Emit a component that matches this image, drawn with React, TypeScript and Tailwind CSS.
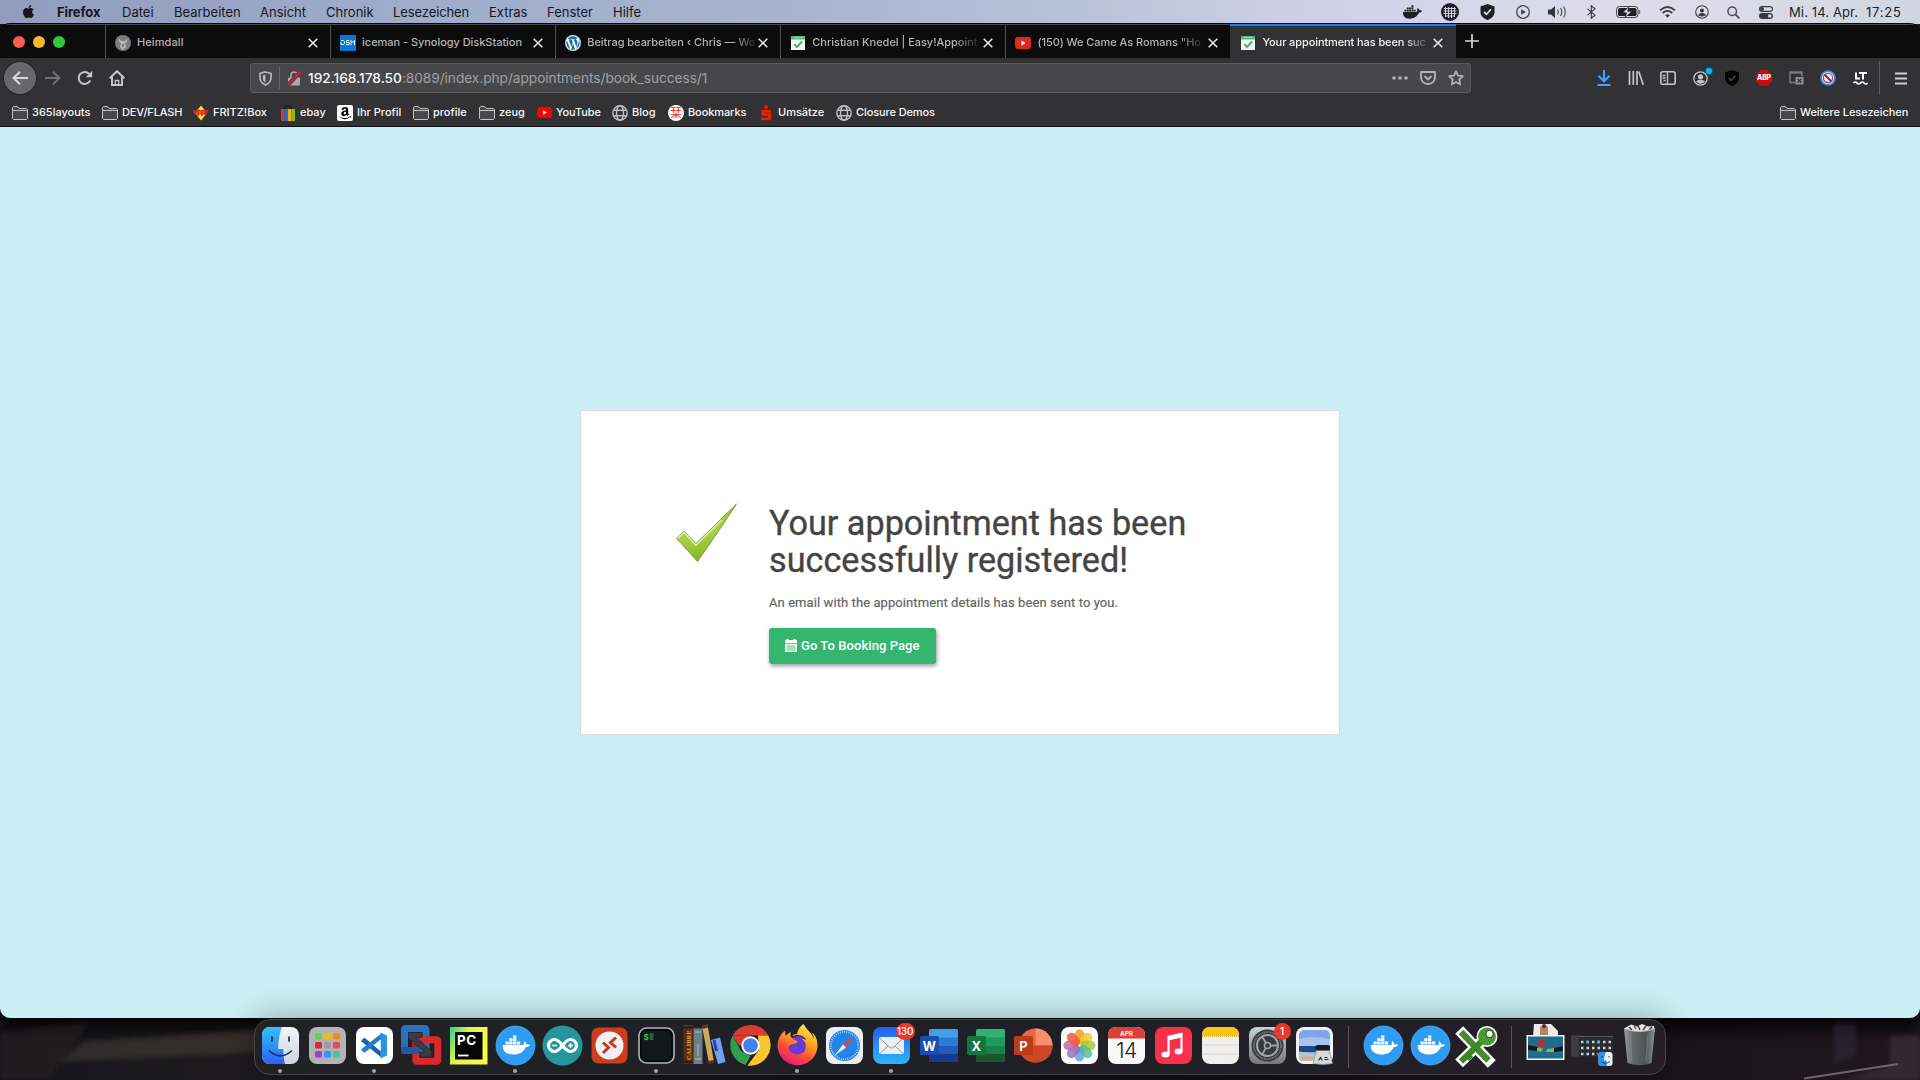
import React from "react";
import { FaApple, FaDocker, FaFirefoxBrowser, FaWordpress, FaAmazon } from "react-icons/fa";

/* ---------- small glyph helpers ---------- */

type SvgProps = { w: number; h: number; box?: string; className?: string; children: React.ReactNode };

function Glyph({ w, h, box, className = "", children }: SvgProps) {
  return (
    <svg width={w} height={h} viewBox={box ?? `0 0 ${w} ${h}`} fill="none" className={`shrink-0 ${className}`}>
      {children}
    </svg>
  );
}

function Folder() {
  return (
    <Glyph w={16} h={14}>
      <path d="M.5 12.5v-11l1-1h4l1.5 2h7.5l1 1v9l-1 1h-13z" fill="#48484b" stroke="#c4c4c5" />
      <path d="M1 4.5h14" stroke="#c4c4c5" />
    </Glyph>
  );
}

function Globe() {
  return (
    <Glyph w={16} h={16} className="text-[#bdbdbf]">
      <g stroke="currentColor" strokeWidth="1.4">
        <circle cx="8" cy="8" r="7.2" />
        <ellipse cx="8" cy="8" rx="3.5" ry="7.2" />
        <path d="M1.6 5.3h12.8M1.6 10.7h12.8" />
      </g>
    </Glyph>
  );
}

/* ---------- menu bar ---------- */

const menus = [
  { label: "Firefox", cls: "w-[65px] font-bold tracking-[-0.1px]" },
  { label: "Datei", cls: "w-[52px]" },
  { label: "Bearbeiten", cls: "w-[86px]" },
  { label: "Ansicht", cls: "w-[66px]" },
  { label: "Chronik", cls: "w-[67px]" },
  { label: "Lesezeichen", cls: "w-[96px] tracking-[-0.1px]" },
  { label: "Extras", cls: "w-[58px]" },
  { label: "Fenster", cls: "w-[66px]" },
  { label: "Hilfe", cls: "w-[40px]" },
];

function MenuBar() {
  return (
    <header className="flex h-6 items-center bg-[linear-gradient(90deg,#929dbd_0%,#9facca_22%,#a9b5d0_42%,#b7c3d8_56%,#cdcfe5_67%,#dad9e9_80%,#dfdce9_88%,#cfd6e2_100%)] pl-[21px] text-[13px] text-[#15171f]">
      <FaApple className="mr-[21px] -mt-0.5 size-[15px] shrink-0 text-[#17181d]" />
      {menus.map((m) => (
        <span key={m.label} className={`shrink-0 whitespace-nowrap pt-[2px] ${m.cls}`}>
          {m.label}
        </span>
      ))}
      <div className="ml-auto flex h-6 items-center text-[#1d1e24]">
        <div className="flex w-[37px] justify-center">
          <FaDocker className="h-[18px] w-[19px]" />
        </div>
        <div className="flex w-[38px] justify-center">
          <Glyph w={18} h={18}>
            <circle cx="9" cy="9" r="9" fill="currentColor" />
            <path d="M3 5.5h12M2.5 8h13M2.5 10.5h13M4 13h10M4.5 4v10M7.5 4v11M10.5 4v11M13.5 4v10" stroke="#dcdbe9" strokeWidth=".9" />
          </Glyph>
        </div>
        <div className="flex w-[37px] justify-center">
          <Glyph w={15} h={16}>
            <path d="M7.5 0 14.500 2.500v5.500c0 4-3 6.500-7 8-4-1.500-7-4-7-8V2.500z" fill="currentColor" />
            <path d="m4 7.800 2.500 2.500L11 5.300" stroke="#dcdbe9" strokeWidth="1.700" />
          </Glyph>
        </div>
        <div className="flex w-[34px] justify-center">
          <Glyph w={14} h={14}>
            <circle cx="7" cy="7" r="6.300" stroke="#3e3f45" strokeWidth="1.200" />
            <path d="M5.200 4.300v5.400L9.800 7z" fill="#3e3f45" />
          </Glyph>
        </div>
        <div className="flex w-[35px] justify-center">
          <Glyph w={19} h={14}>
            <path d="M0 4.500h3l4-3.500v12L3 9.500H0z" fill="#34353b" />
            <path d="M9.500 4.500q1.500 2.500 0 5M12.500 3q2.600 4 0 8M15.500 1.500q3.600 5.500 0 11" stroke="#55565e" strokeWidth="1.200" />
          </Glyph>
        </div>
        <div className="flex w-[33px] justify-center">
          <Glyph w={9} h={14}>
            <path d="m.5 3.800 7.500 6.400-3.700 3V.8l3.700 3-7.500 6.400" stroke="#34353b" strokeWidth="1.100" />
          </Glyph>
        </div>
        <div className="flex w-[40px] justify-center">
          <Glyph w={25} h={12}>
            <rect x=".5" y=".5" width="21.500" height="11" rx="3" stroke="#44454b" />
            <rect x="2" y="2" width="18.500" height="8" rx="1.600" fill="#1d1e24" />
            <path d="M23.500 4.200v3.600" stroke="#66676e" strokeWidth="1.400" />
            <path d="M12.700.8 6.500 6.700h4l-1.200 4.500L16 5.300h-4.300z" fill="#e4e2ee" stroke="#1d1e24" strokeWidth=".7" />
          </Glyph>
        </div>
        <div className="flex w-[38px] justify-center">
          <Glyph w={17} h={12}>
            <path d="M1 4.300q7.500-6.600 15 0M3.600 7q4.900-4.300 9.800 0" stroke="#3a3b42" strokeWidth="1.700" />
            <path d="m8.500 11.800-2.300-2.600q2.300-1.800 4.600 0z" fill="#3a3b42" />
          </Glyph>
        </div>
        <div className="flex w-[31px] justify-center">
          <Glyph w={14} h={14}>
            <circle cx="7" cy="7" r="6.300" stroke="#3a3b42" strokeWidth="1.100" />
            <circle cx="7" cy="5.400" r="2" fill="#3a3b42" />
            <path d="M3.300 10.500q0-2.600 3.700-2.600t3.700 2.600q-3.700 2-7.400 0" fill="#3a3b42" />
          </Glyph>
        </div>
        <div className="flex w-[33px] justify-center">
          <Glyph w={13} h={13}>
            <circle cx="5.200" cy="5.200" r="4.300" stroke="#4b4c54" strokeWidth="1.500" />
            <path d="m8.400 8.400 4 4" stroke="#4b4c54" strokeWidth="1.900" />
          </Glyph>
        </div>
        <div className="flex w-[31px] justify-center">
          <Glyph w={14} h={13}>
            <rect x=".6" y=".6" width="12.800" height="4.800" rx="2.400" stroke="#3a3b42" strokeWidth="1.100" />
            <circle cx="3" cy="3" r="2" fill="#3a3b42" />
            <rect y="7" width="14" height="6" rx="3" fill="#3a3b42" />
            <circle cx="10.800" cy="10" r="1.800" fill="#dcdbe9" />
          </Glyph>
        </div>
        <span className="ml-[8px] w-[77px] whitespace-nowrap pt-px tracking-[0.12px]">Mi. 14. Apr.</span>
        <span className="w-[54px] whitespace-nowrap pt-px tracking-[0.8px]">17:25</span>
      </div>
    </header>
  );
}

/* ---------- tabs ---------- */

function CalendarFavicon() {
  return (
    <Glyph w={14} h={14}>
      <path d="M0 0h14v14H0z" fill="#f4f6f4" />
      <path d="M0 0h14v3.500H0z" fill="#57b77a" />
      <path d="M2 1.500h10" stroke="#8fd3a6" />
      <path d="m3.300 8.300 2.700 2.700 5-5.500" stroke="#45b36e" strokeWidth="2" />
    </Glyph>
  );
}

function YoutubeIcon({ w = 16, h = 12, fill = "#f00" }: { w?: number; h?: number; fill?: string }) {
  return (
    <Glyph w={w} h={h} box="0 0 16 12">
      <rect width="16" height="12" rx="3" fill={fill} />
      <path d="M6.400 3.500v5L10.700 6z" fill="#fff" />
    </Glyph>
  );
}

const tabs = [
  {
    title: "Heimdall",
    cls: "tracking-[0.1px]",
    icon: (
      <Glyph w={16} h={16}>
        <circle cx="8" cy="8" r="8" fill="#7b7b7b" />
        <path d="M4 3q-1 4 2 5l-1 4 3 3 3-3-1-4q3-1 2-5-1 3-2.500 3h-3Q5 6 4 3z" fill="#b9b9b9" />
        <path d="M7 9h2l-.3 3H7.300z" fill="#666" />
      </Glyph>
    ),
  },
  {
    title: "iceman - Synology DiskStation",
    cls: "tracking-[-0.04px]",
    icon: (
      <Glyph w={16} h={16}>
        <rect width="16" height="16" rx="1" fill="#0a78d1" />
        <path d="M1 5.500h2.500l1 1v2l-1 1H1V7M9.300 5.500H6.500v2h2.800v2H6M11 10V5.500l1.800 2 1.700-2V10" stroke="#fff" strokeWidth=".9" />
      </Glyph>
    ),
  },
  {
    title: "Beitrag bearbeiten ‹ Chris — Wo",
    cls: "tracking-[-0.03px] [mask-image:linear-gradient(90deg,#000_86%,transparent_103%)]",
    icon: (
      <span className="flex size-4 items-center justify-center rounded-full bg-white">
        <FaWordpress className="size-4 text-[#16719a]" />
      </span>
    ),
  },
  {
    title: "Christian Knedel | Easy!Appoint",
    cls: "tracking-[-0.03px] [mask-image:linear-gradient(90deg,#000_86%,transparent_103%)]",
    icon: <CalendarFavicon />,
  },
  {
    title: '(150) We Came As Romans "Ho',
    cls: "tracking-[-0.05px] [mask-image:linear-gradient(90deg,#000_86%,transparent_103%)]",
    icon: <YoutubeIcon w={16} h={12} fill="#dc2a20" />,
  },
  {
    title: "Your appointment has been suc",
    cls: "tracking-[-0.1px] [mask-image:linear-gradient(90deg,#000_86%,transparent_103%)]",
    icon: <CalendarFavicon />,
    active: true,
  },
];

function TabBar() {
  return (
    <div className="flex h-[34px] items-stretch border-t border-[#4b4b4d] bg-[#0c0c0d]">
      <div className="flex w-[105px] items-center gap-2 pl-[13px]">
        <i className="size-3 rounded-full bg-[#fc5b52]" />
        <i className="size-3 rounded-full bg-[#fdb72c]" />
        <i className="size-3 rounded-full bg-[#34c63e]" />
      </div>
      {tabs.map((t) => (
        <div
          key={t.title}
          className={`-mt-px flex w-[225.1px] shrink-0 items-center border-t-2 pt-px pl-[9px] text-[11px] ${
            t.active ? "border-t-[#0a84ff] bg-[#323234] pl-[10px] text-[#f4f4f5]" : "border-l border-t-transparent border-l-[#4f4f51] text-[#b3b3b5]"
          }`}
        >
          <span className="flex w-4 shrink-0 justify-center">{t.icon}</span>
          <span className="ml-[6px] w-[171px] shrink-0">
            <span className={`inline-block whitespace-nowrap font-medium ${t.cls}`}>{t.title}</span>
          </span>
          <Glyph w={10} h={10} className="text-[#f0f0f0]">
            <path d="m.7.700 8.600 8.600m0-8.600L.7 9.300" stroke="currentColor" strokeWidth="1.500" />
          </Glyph>
        </div>
      ))}
      <Glyph w={14} h={14} className="mt-[9px] ml-[9px] text-[#d4d4d5]">
        <path d="M7 0v14M0 7h14" stroke="currentColor" strokeWidth="1.700" />
      </Glyph>
    </div>
  );
}

/* ---------- navigation toolbar ---------- */

function Slot({ children }: { children: React.ReactNode }) {
  return <div className="flex h-8 w-8 shrink-0 items-center justify-center text-[#c5c5c7]">{children}</div>;
}

function NavBar() {
  return (
    <div className="flex h-10 items-center text-[#c5c5c7]">
      <div className="ml-1 flex size-8 shrink-0 items-center justify-center rounded-full bg-[#68686a] shadow-[0_0_0_1px_#252527]">
        <Glyph w={16} h={14}>
          <path d="M8 .8 1.500 7 8 13.200M1.500 7H16" stroke="#d8d8d9" strokeWidth="2" />
        </Glyph>
      </div>
      <div className="ml-[1px] flex w-8 justify-center">
        <Glyph w={16} h={14}>
          <path d="M8 .8 14.500 7 8 13.200M14.500 7H0" stroke="#707072" strokeWidth="1.900" />
        </Glyph>
      </div>
      <div className="flex w-8 justify-center">
        <Glyph w={16} h={16}>
          <path d="M13.200 10.300A6 6 0 1 1 12.200 4" stroke="currentColor" strokeWidth="2" />
          <path d="M15.200.8v6.400H8.800z" fill="currentColor" />
        </Glyph>
      </div>
      <div className="flex w-8 justify-center">
        <Glyph w={16} h={16}>
          <path d="M.7 8.300 8 1.200l7.300 7.100M3 7v7.900h10V7" stroke="currentColor" strokeWidth="2" />
          <path d="M6.300 15v-4.500h3.400V15" stroke="currentColor" strokeWidth="1.300" />
        </Glyph>
      </div>
      <div className="ml-[117px] flex h-[30px] w-[1221px] items-center rounded-[3px] border border-[#5c5c5e] bg-[#474749] pl-2">
        <Glyph w={13} h={15}>
          <path d="M6.500 1 12 2.500v4.500c0 3.500-2.500 5.500-5.500 7-3-1.500-5.500-3.500-5.500-7V2.500z" stroke="#b5b5b7" strokeWidth="1.700" />
          <path d="M6.500 3.700v7.800C4.500 10.500 3.800 9 3.800 7V4.300z" fill="#b5b5b7" />
        </Glyph>
        <i className="ml-[7px] h-[22px] w-px bg-[#69696b]" />
        <Glyph w={14} h={15} className="ml-[7px]">
          <path d="M4 7V4a3 3 0 0 1 6 0v3" stroke="#aaaaac" strokeWidth="1.700" />
          <rect x="1" y="6.500" width="12" height="8" rx="1" fill="#aaaaac" />
          <path d="M.5 14.500 13.500.5" stroke="#474749" strokeWidth="4" />
          <path d="M.5 14.500 13.500.5" stroke="#f0103f" strokeWidth="1.900" />
        </Glyph>
        <span className="ml-[7px] whitespace-nowrap pt-px text-[13.700px] text-[#a0a0a2]">
          <span className="font-medium tracking-[-0.02px] text-[#f9f9fa]">192.168.178.50</span>
          <span className="tracking-[-0.040px]">:8089/index.php/appointments/book_success/1</span>
        </span>
        <div className="ml-auto flex items-center">
          <div className="flex w-7 justify-center">
            <Glyph w={16} h={4}>
              <g fill="#b5b5b7">
                <circle cx="2" cy="2" r="1.800" />
                <circle cx="8" cy="2" r="1.800" />
                <circle cx="14" cy="2" r="1.800" />
              </g>
            </Glyph>
          </div>
          <div className="flex w-7 justify-center">
            <Glyph w={16} h={14}>
              <path d="M1 1h14v5.500a7 6.500 0 0 1-14 0z" stroke="#b5b5b7" strokeWidth="1.800" strokeLinejoin="round" />
              <path d="m4.500 5 3.500 3.500L11.500 5" stroke="#b5b5b7" strokeWidth="1.800" />
            </Glyph>
          </div>
          <div className="flex w-7 justify-center">
            <Glyph w={16} h={16}>
              <path d="m8 1.300 2 4.400 4.900.5-3.600 3.300 1 4.800L8 11.900l-4.300 2.400 1-4.800L1.100 6.200 6 5.700z" stroke="#b5b5b7" strokeWidth="1.700" strokeLinejoin="round" />
            </Glyph>
          </div>
        </div>
      </div>
      <div className="ml-auto flex items-center">
        <Slot>
          <Glyph w={14} h={16}>
            <path d="M7 0v11M1.500 5.800 7 11.300l5.500-5.500M.5 15h13" stroke="#45a1ff" strokeWidth="2" />
          </Glyph>
        </Slot>
        <Slot>
          <Glyph w={16} h={14}>
            <path d="M1.500 0v14M5.300 0v14M9 0v14M10.800.5 15.300 14" stroke="currentColor" strokeWidth="1.700" />
          </Glyph>
        </Slot>
        <Slot>
          <Glyph w={16} h={14}>
            <rect x=".8" y=".8" width="14.400" height="12.400" rx="2" stroke="currentColor" strokeWidth="1.600" />
            <path d="M7.500 1v12M2.500 4.500h3M2.500 7h3M3.500 9.500h2" stroke="currentColor" strokeWidth="1.300" />
          </Glyph>
        </Slot>
        <Slot>
          <div className="relative">
            <Glyph w={15} h={15}>
              <circle cx="7.500" cy="7.500" r="6.700" stroke="currentColor" strokeWidth="1.300" />
              <circle cx="7.500" cy="5.800" r="2.600" fill="currentColor" />
              <path d="M3 10.300q1.500-1.500 4.500-1.500t4.500 1.500q-1.500 2.400-4.500 2.400T3 10.300" fill="currentColor" />
            </Glyph>
            <i className="absolute -top-[3px] -right-[4px] size-[6px] rounded-full bg-[#0cb4fb] shadow-[0_0_0_1px_#14587c]" />
          </div>
        </Slot>
        <Slot>
          <Glyph w={14} h={16}>
            <path d="M7 0 14 2.500V8c0 4-3 6.500-7 8-4-1.500-7-4-7-8V2.500z" fill="#040404" />
            <path d="m3.800 8 2.300 2.300 4.200-4.700" stroke="#454547" strokeWidth="1.500" />
          </Glyph>
        </Slot>
        <Slot>
          <div className="flex size-4 items-center justify-center bg-[#c70d0d] text-[7px] font-extrabold tracking-[-0.2px] text-white [clip-path:polygon(30%_0,70%_0,100%_30%,100%_70%,70%_100%,30%_100%,0_70%,0_30%)]">ABP</div>
        </Slot>
        <Slot>
          <Glyph w={15} h={14}>
            <path d="M6 11.500H1V1h12v4.500M1 2h12" stroke="#77777a" strokeWidth="1.500" />
            <rect x="6.500" y="6" width="8" height="7.500" fill="#8e8e91" />
            <path d="m8.700 8 3.600 3.600m0-3.600-3.600 3.600" stroke="#29292b" strokeWidth="1.200" />
          </Glyph>
        </Slot>
        <Slot>
          <Glyph w={16} h={16}>
            <circle cx="8" cy="8" r="7.800" fill="#3d8de0" />
            <circle cx="8" cy="8" r="6" fill="#f3f3f5" />
            <circle cx="8" cy="8" r="4.600" stroke="#9c4a5c" strokeWidth="1.200" />
            <path d="m4.500 4.500 7 7" stroke="#9b2538" strokeWidth="2" />
          </Glyph>
        </Slot>
        <Slot>
          <Glyph w={15} h={13}>
            <path d="M3 .5v6h4M6 1h8M10 1v6.500" stroke="#fff" strokeWidth="2" />
            <path d="M.5 11q1.800-2 3.500 0t3.500 0 3.500 0 3.500 0" stroke="#fff" strokeWidth="1.600" />
          </Glyph>
        </Slot>
        <i className="ml-[3px] h-[34px] w-px bg-[#5b5b5d]" />
        <Glyph w={12} h={13} className="mr-[13px] ml-[15px]">
          <path d="M0 1.500h12M0 6.500h12M0 11.500h12" stroke="#d0d0d1" strokeWidth="1.900" />
        </Glyph>
      </div>
    </div>
  );
}

/* ---------- bookmarks ---------- */

const bookmarks = [
  { label: "365layouts", cls: "w-[90px]", icon: <Folder /> },
  { label: "DEV/FLASH", cls: "w-[91px] tracking-[-0.15px]", icon: <Folder /> },
  {
    label: "FRITZ!Box",
    cls: "w-[87px]",
    icon: (
      <Glyph w={16} h={16}>
        <path d="M8 .5 14 8l-6 7.500L2 8z" fill="#ffe11c" />
        <path d="m0 5 4 .5 2-1 2 1 2.500-1 1.500 1 4-1-2 4-1.500 2-2-1.500-1.500 2.500-2-2.500L5 11.500 3.500 9 1 9.500z" fill="#d8252b" />
        <path d="M4 6.500v3M7 6v4M10 6v3" stroke="#ffb21c" strokeWidth=".6" />
      </Glyph>
    ),
  },
  {
    label: "ebay",
    cls: "w-[57px]",
    icon: (
      <Glyph w={16} h={16}>
        <path d="M5 4V1.800Q8 0 11 1.800V4" stroke="#18181a" strokeWidth="1.500" />
        <path d="M1 4h3.500v12H1z" fill="#e53238" />
        <path d="M4.500 4H8v12H4.500z" fill="#1c6fe0" />
        <path d="M8 4h3.500v12H8z" fill="#f5af02" />
        <path d="M11.500 4H15v12h-3.500z" fill="#86b817" />
      </Glyph>
    ),
  },
  {
    label: "Ihr Profil",
    cls: "w-[76px]",
    icon: (
      <span className="flex size-4 items-center justify-center rounded-[2px] bg-white">
        <FaAmazon className="size-[14px] text-black" />
      </span>
    ),
  },
  { label: "profile", cls: "w-[66px]", icon: <Folder /> },
  { label: "zeug", cls: "w-[57px]", icon: <Folder /> },
  { label: "YouTube", cls: "w-[76px] tracking-[-0.12px]", icon: <YoutubeIcon w={15} h={11} /> },
  { label: "Blog", cls: "w-[56px]", icon: <Globe /> },
  {
    label: "Bookmarks",
    cls: "w-[90px] tracking-[-0.1px]",
    icon: <span className="flex size-4 items-center justify-center rounded-full bg-white font-['Noto_Sans_CJK_JP',sans-serif] text-[11px] leading-none text-[#ee3a2c]">栞</span>,
  },
  {
    label: "Umsätze",
    cls: "w-[78px]",
    icon: (
      <Glyph w={12} h={16}>
        <circle cx="6" cy="2" r="2" fill="#f21c00" />
        <path d="M11 6.300H2.700v3.400h7v4.100H1" stroke="#f21c00" strokeWidth="2.800" strokeLinejoin="round" />
      </Glyph>
    ),
  },
  { label: "Closure Demos", cls: "w-[120px] tracking-[-0.1px]", icon: <Globe /> },
];

function Bookmarks() {
  return (
    <div className="flex h-[29px] items-center border-b border-[#0e0e10] pt-px pl-3 text-[11px] font-medium text-[#f6f6f7]">
      {bookmarks.map((b) => (
        <div key={b.label} className={`flex shrink-0 items-center gap-1 whitespace-nowrap ${b.cls}`}>
          <span className="flex w-4 shrink-0 justify-center">{b.icon}</span>
          {b.label}
        </div>
      ))}
      <div className="ml-auto flex w-[140px] items-center gap-1 whitespace-nowrap tracking-[-0.06px]">
        <Folder />
        Weitere Lesezeichen
      </div>
    </div>
  );
}

/* ---------- page ---------- */

function Page() {
  return (
    <main className="flex flex-1 justify-center bg-[#caeef3]">
      <section className="mt-[283px] flex h-[325px] w-[760px] border border-[#dcdcdc] bg-white pl-[95px] font-[Roboto,sans-serif]">
        <svg width="62" height="60" viewBox="0 0 62 60" className="mt-[92px] shrink-0">
          <defs>
            <linearGradient id="tick" x1="0" y1="0" x2="0.3" y2="1">
              <stop offset="0" stopColor="#8cc02d" />
              <stop offset=".6" stopColor="#a9d03f" />
              <stop offset="1" stopColor="#84b62c" />
            </linearGradient>
          </defs>
          <path d="M60.500 1Q45 25 21.500 58.500L.8 35.500l7-7.500L20 40.500Q41 20 60.500 1z" fill="url(#tick)" stroke="#6f9d33" strokeWidth=".9" />
          <path d="M2.300 35.300 7.800 29.500 20 42.300Q34 28.500 46 17" stroke="#e6f3bd" strokeWidth="1.300" fill="none" />
        </svg>
        <div className="ml-[31px] pt-[94px]">
          <h1 className="w-[440px] text-[34.200px] leading-[37px] text-[#444] [-webkit-text-stroke:0.35px_#444]">
            <span className="block whitespace-nowrap">Your appointment has been</span>
            <span className="block whitespace-nowrap">successfully registered!</span>
          </h1>
          <p className="mt-[14px] whitespace-nowrap text-[13px] leading-5 tracking-[0.085px] text-[#666] [-webkit-text-stroke:0.2px_#666]">
            An email with the appointment details has been sent to you.
          </p>
          <button className="mt-[15px] flex h-9 w-[167px] items-center rounded-[3px] bg-[#35b66f] pl-4 text-[13px] font-medium tracking-[0.07px] text-white shadow-[1px_2px_4px_rgba(0,0,0,0.4)]">
            <Glyph w={12} h={13} className="-mt-0.5 mr-[4px]">
              <path d="M0 1h1.500V0h2v1h5V0h2v1H12v3H0zM0 4.700h12V13H0z" fill="#fff" />
              <path d="M1 7h10M1 9h10M1 11h10M3 5.500v7M5 5.500v7M7 5.500v7M9 5.500v7" stroke="#35b66f" strokeWidth=".5" />
            </Glyph>
            Go To Booking Page
          </button>
        </div>
      </section>
    </main>
  );
}

/* ---------- dock ---------- */

function Cell({ children, running, badge }: { children: React.ReactNode; running?: boolean; badge?: string }) {
  return (
    <div className="relative flex w-[47px] shrink-0 flex-col items-center">
      <svg width="47" height="47" viewBox="0 0 47 47" fill="none" className="block overflow-visible">
        {children}
      </svg>
      {running && <i className="size-1 rounded-full bg-[#a5a5a8]" />}
      {badge && (
        <b className="absolute top-[1px] right-0 flex h-[17px] min-w-[17px] items-center justify-center rounded-full bg-[#e8392f] px-px text-[10px] font-medium text-white">{badge}</b>
      )}
    </div>
  );
}

function Whale() {
  return (
    <>
      <circle cx="23.500" cy="23.500" r="19.500" fill="#2f9cf4" stroke="#59b2f8" strokeWidth=".7" />
      <g fill="#fff">
        <path d="M10.800 23h20.500c1-1.200.6-3 .5-4 1.500.6 2.400 2 2.400 3.500 1.300-.4 2.800-.2 3.800.6-.8 1.500-2.500 2-4.200 1.900-2.200 5-6.300 7.500-12.500 7.500-6.800 0-11-3.500-10.500-9.500z" />
        <path d="M13.500 19.500h3.300v3h-3.300zM17.300 19.500h3.300v3h-3.300zM21.100 19.500h3.300v3h-3.300zM24.900 19.500h3.300v3h-3.300zM17.300 16.200h3.300v2.900h-3.300zM21.100 16.200h3.300v2.900h-3.300zM21.100 13.500h3.300v2.300h-3.300z" />
      </g>
    </>
  );
}

function Office({ letter, dark, tones }: { letter: string; dark: string; tones: string[] }) {
  return (
    <>
      <rect x="14" y="7" width="29" height="33" rx="1.500" fill={tones[0]} />
      <path d="M14 15.500h29V24H14z" fill={tones[1]} />
      <path d="M14 24h29v8H14z" fill={tones[2]} />
      <path d="M14 32h29v6.500q0 1.500-1.500 1.500h-26Q14 40 14 38.500z" fill={tones[3]} />
      <rect x="5" y="14" width="19" height="19" rx="1.500" fill={dark} />
      <text x="14.300" y="28.500" fontSize="13" fontWeight="700" textAnchor="middle" fill="#fff">
        {letter}
      </text>
    </>
  );
}

const launchpad = [
  ["#5bd84b", "#f9b619", "#f58a12"],
  ["#dc2c2c", "#9d9da1", "#f4425f"],
  ["#9d40d8", "#2f96f8", "#48c49a"],
];

const petals = ["#f79a1d", "#e9cf20", "#a6c93b", "#5cbf8a", "#5aa4dc", "#8f76c2", "#c46aa4", "#f0583c"];

function Divider() {
  return <i className="mx-auto mt-[4px] h-[42px] w-px shrink-0 bg-[#57575a]" />;
}

function Dock() {
  return (
    <nav className="absolute bottom-[5px] left-[254px] flex h-14 w-[1412px] rounded-[16px] border border-[#454548] bg-[linear-gradient(90deg,#222224_0%,#1e2026_50%,#251e28_100%)] pt-[2px] pl-[1.500px] shadow-[0_0_32px_rgba(0,0,0,0.32)]">
      <Cell running>
        <defs>
          <linearGradient id="finder" x2="0" y2="1">
            <stop stopColor="#31c2fb" />
            <stop offset="1" stopColor="#2a62f3" />
          </linearGradient>
          <linearGradient id="silver" x2="0" y2="1">
            <stop stopColor="#f3f4f7" />
            <stop offset="1" stopColor="#cfd4e0" />
          </linearGradient>
        </defs>
        <rect x="5" y="5" width="37" height="37" rx="8" fill="url(#silver)" />
        <path d="M25 5H13a8 8 0 0 0-8 8v21a8 8 0 0 0 8 8h15q-1.700-6-1.700-15H21q.5-13 4-22z" fill="url(#finder)" />
        <path d="M15 15v4M32 15v4" stroke="#1b2b49" strokeWidth="1.700" strokeLinecap="round" />
        <path d="M12.500 29q11 9.500 22 0" stroke="#1b2b49" strokeWidth="1.600" strokeLinecap="round" />
      </Cell>
      <Cell>
        <rect x="5" y="5" width="37" height="37" rx="8" fill="#b3b3b6" />
        {launchpad.map((row, r) => row.map((c, i) => <rect key={c} x={11 + i * 9} y={11 + r * 9} width="7" height="6.500" rx="1.600" fill={c} />))}
      </Cell>
      <Cell running>
        <rect x="5" y="5" width="37" height="37" rx="8" fill="#fff" />
        <path d="m10.500 18 3-2.300L31 30v6L10.500 19.500z" fill="#1a63a8" />
        <path d="m10.500 28.500 3 2.300L31 17v-6L10.500 27z" fill="#2380c4" />
        <path d="m29.500 10.500 6.500 3v20l-6.500 3z" fill="#2c93df" />
        <path d="M29.500 17.500v11.500l-7-5.800z" fill="#fff" />
      </Cell>
      <Cell>
        <rect x="6.500" y="6.500" width="21.500" height="22" rx="1" stroke="#2a6fc0" strokeWidth="7" />
        <rect x="17.800" y="17.800" width="22" height="21.500" rx="1" stroke="#d8292c" strokeWidth="7" />
        <path d="M14 31.500v-10h7.500v10z" fill="#a81d20" />
        <path d="M10.500 10.500H24v5h-5l14.500 14v5.500H22v-5h4.500L10.500 16z" fill="#3b3c41" stroke="#26272b" strokeWidth=".8" />
        <path d="M3.500 25h18v6.700h-18z" fill="#1f58a5" />
      </Cell>
      <Cell>
        <defs>
          <linearGradient id="pc" x2="1" y2=".5">
            <stop stopColor="#24d18b" />
            <stop offset=".45" stopColor="#e5f34c" />
            <stop offset="1" stopColor="#f8f94a" />
          </linearGradient>
        </defs>
        <path d="M5 5h37.500v37.500H5z" fill="url(#pc)" />
        <path d="M10 10h27.500v27.500H10z" fill="#060606" />
        <text x="12" y="22.500" fontSize="13.500" fontWeight="700" fill="#fff" letterSpacing=".5">
          PC
        </text>
        <path d="M13 33.500h10.500" stroke="#fff" strokeWidth="1.800" />
      </Cell>
      <Cell running>
        <Whale />
      </Cell>
      <Cell>
        <circle cx="23.500" cy="23.500" r="20" fill="#25979c" />
        <g stroke="#fff" strokeWidth="3.200">
          <path d="M23.500 23.500c-3-4-5-6-8-6a6 6 0 0 0 0 12c3 0 5-2 8-6s5-6 8-6a6 6 0 0 1 0 12c-3 0-5-2-8-6z" />
        </g>
        <path d="M13 23.500h5M29 23.500h5M31.500 21v5" stroke="#fff" strokeWidth="1.600" />
      </Cell>
      <Cell>
        <rect x="5.500" y="5.500" width="36" height="36" rx="7" fill="#cb3d1e" />
        <circle cx="23.500" cy="23.500" r="14" fill="#f1eff0" />
        <path d="m17 20.500 5.500 5-5.500 5.500M30 15.500l-5.500 5 5.500 5" stroke="#c6391c" strokeWidth="3" />
      </Cell>
      <Cell running>
        <rect x="6" y="6" width="35" height="35" rx="7.500" fill="#0d1113" stroke="#aeb4b8" strokeWidth="1.600" />
        <rect x="8" y="8" width="31" height="31" rx="6" fill="#11181b" stroke="#05090a" strokeWidth="1.500" />
        <text x="10.500" y="18" fontSize="8" fontWeight="700" fill="#3fc452">
          $
        </text>
        <path d="M16.500 11h4v7h-4z" fill="#1f642c" />
      </Cell>
      <Cell>
        <path d="M3.500 3h10v39h-10z" fill="#5a2c10" />
        <path d="M3.500 5.500h10M3.500 40h10" stroke="#2c1508" strokeWidth="1.500" />
        <text transform="rotate(-90 11 38)" x="11" y="37.500" fontSize="6.500" fontWeight="700" fill="#e0a94c" fontFamily="Liberation Serif, serif">
          CALIBRE
        </text>
        <path d="M13.500 6.500h9V42h-9z" fill="#6c7f86" />
        <path d="M15 10h6M15 37h6M18 22v12" stroke="#b3c1c5" strokeWidth="1" />
        <path d="m22 4 5.500-1.500L34 40l-5 1.500z" fill="#cda95a" />
        <path d="m22 4 5.500-1.500.6 3-5.500 1.200zM28.700 39l5-1 .4 2.300-5 1.200z" fill="#6b2222" />
        <path d="m31 18 9-2.500L45.500 40l-7.500 2z" fill="#739ff2" />
        <path d="m34 18 2.500 11" stroke="#2444b5" strokeWidth="3" />
      </Cell>
      <Cell>
        <path d="M5.700 13.500A20.500 20.500 0 0 1 41.500 13.500H23.500z" fill="#d93c30" />
        <path d="M5.700 13.500 14 29l9.500 5L18.500 43A20.500 20.500 0 0 1 5.700 13.500z" fill="#2fa04e" />
        <path d="M41.200 13.500A20.500 20.500 0 0 1 20.500 43.500L32 28l-1-14.500z" fill="#fbc52d" />
        <path d="M5.700 13.500h17.800v10H12z" fill="#d93c30" />
        <circle cx="23.500" cy="23.500" r="9.200" fill="#fff" />
        <circle cx="23.500" cy="23.500" r="7.300" fill="#4480ea" />
      </Cell>
      <Cell running>
        <defs>
          <linearGradient id="fox" x1=".8" y1="0" x2=".3" y2="1">
            <stop stopColor="#fff14a" />
            <stop offset=".35" stopColor="#ffaa1e" />
            <stop offset=".7" stopColor="#ff4b38" />
            <stop offset="1" stopColor="#e3158c" />
          </linearGradient>
        </defs>
        <circle cx="24" cy="24" r="10" fill="#6a3ad6" />
        <FaFirefoxBrowser x={2.500} y={2} size={42} fill="url(#fox)" />
      </Cell>
      <Cell>
        <rect x="5" y="5" width="37" height="37" rx="8" fill="#eceef0" />
        <circle cx="23.500" cy="23.500" r="15.500" fill="#2485e8" />
        <circle cx="23.500" cy="23.500" r="13.700" stroke="#d5e8fb" strokeWidth="2" strokeDasharray=".7 1.500" />
        <path d="m34 13-9 12.500-3-3z" fill="#f04035" />
        <path d="m13 34 9-11.500 3 3z" fill="#f4f4f6" />
      </Cell>
      <Cell running badge="130">
        <defs>
          <linearGradient id="mail" x2="0" y2="1">
            <stop stopColor="#2160ef" />
            <stop offset="1" stopColor="#2fb5fb" />
          </linearGradient>
        </defs>
        <rect x="5" y="5" width="37" height="37" rx="8" fill="url(#mail)" />
        <rect x="11" y="15" width="25" height="17" rx="2" fill="#eceef1" />
        <path d="m11.500 16 10.500 9.500q1.500 1.200 3 0L35.500 16M12 31.500l8-7.500M35 31.500 27 24" stroke="#8b8f97" strokeWidth=".9" />
      </Cell>
      <Cell>
        <Office letter="W" dark="#1c4dae" tones={["#419fe8", "#2b7bd3", "#1f5bbc", "#1b398c"]} />
      </Cell>
      <Cell>
        <Office letter="X" dark="#147540" tones={["#30b272", "#20995a", "#188048", "#1c5631"]} />
      </Cell>
      <Cell>
        <circle cx="26.500" cy="23.500" r="17" fill="#e9643f" />
        <path d="M26.500 6.500a17 17 0 0 1 17 17h-17z" fill="#fb8e6d" />
        <path d="M9.500 23.500a17 17 0 0 0 34 0z" fill="#cb4725" />
        <rect x="5" y="14" width="19" height="19" rx="1.500" fill="#bd3b19" />
        <text x="14.500" y="28.500" fontSize="13" fontWeight="700" textAnchor="middle" fill="#fff">
          P
        </text>
      </Cell>
      <Cell>
        <rect x="5" y="5" width="37" height="37" rx="8" fill="#fbfbfb" />
        {petals.map((c, i) => (
          <rect key={c} x="18.800" y="7.500" width="9.400" height="15" rx="4.700" fill={c} fillOpacity=".85" transform={`rotate(${i * 45} 23.500 23.500)`} />
        ))}
      </Cell>
      <Cell>
        <rect x="5" y="5" width="37" height="37" rx="8" fill="#f8f8f8" />
        <path d="M5 16.500V13a8 8 0 0 1 8-8h21a8 8 0 0 1 8 8v3.500z" fill="#de3f38" />
        <text x="23.500" y="13.700" fontSize="6.500" fontWeight="600" textAnchor="middle" fill="#fff">
          APR
        </text>
        <text x="23.500" y="35.500" fontSize="21" fontWeight="300" textAnchor="middle" fill="#222" letterSpacing="-.6">
          14
        </text>
      </Cell>
      <Cell>
        <rect x="5" y="5" width="37" height="37" rx="8" fill="#f8304c" />
        <path d="M18.500 32.500V15l13-3v17.500" stroke="#fff" strokeWidth="2.200" />
        <path d="M18.500 14v4.500l13-3V11z" fill="#fff" />
        <ellipse cx="15.500" cy="32.500" rx="4" ry="3" fill="#fff" />
        <ellipse cx="28.500" cy="29.500" rx="4" ry="3" fill="#fff" />
      </Cell>
      <Cell>
        <rect x="5" y="5" width="37" height="37" rx="8" fill="#f1f0ee" />
        <path d="M5 14v-1a8 8 0 0 1 8-8h21a8 8 0 0 1 8 8v1z" fill="#fbc516" />
        <path d="M5 14.500h37" stroke="#d0a520" strokeDasharray="1 1" strokeWidth=".8" />
        <path d="M5 23h37M5 32h37" stroke="#d0cfce" strokeWidth=".8" />
      </Cell>
      <Cell badge="1">
        <defs>
          <linearGradient id="prefs" x2="0" y2="1">
            <stop stopColor="#c3d3d6" />
            <stop offset="1" stopColor="#77797c" />
          </linearGradient>
        </defs>
        <rect x="5" y="5" width="37" height="37" rx="8" fill="url(#prefs)" />
        <circle cx="23.500" cy="23.500" r="16" fill="#36383b" />
        <circle cx="23.500" cy="23.500" r="13.500" stroke="#85888b" strokeWidth="1.600" strokeDasharray="1 .7" />
        <circle cx="23.500" cy="23.500" r="10.500" stroke="#a2a5a8" strokeWidth="2" />
        <circle cx="23.500" cy="23.500" r="3" stroke="#a2a5a8" strokeWidth="1.600" />
        <path d="M26.500 23.500H34M22 21l-4-6.500M22 26l-4 6.500" stroke="#a2a5a8" strokeWidth="1.800" />
      </Cell>
      <Cell>
        <rect x="5" y="5" width="37" height="37" rx="8" fill="#f2f3f5" />
        <rect x="8" y="8" width="31" height="31" rx="5" fill="#80a5e8" />
        <path d="M8 17q10-4 31 0v8H8z" fill="#a9c2ef" />
        <path d="M8 24h31v6H8z" fill="#1b4b86" />
        <path d="M8 29.500q8 1 20 3V39H13q-5 0-5-5z" fill="#b9c3d2" />
        <path d="M8 36q8-3 14-1v4h-9q-4 0-5-3z" fill="#c9b695" />
        <path d="M25.500 28h12.500l3.500 13.500q-9 2-19.500 0z" fill="#d5d9de" stroke="#8a9098" strokeWidth=".7" />
        <rect x="24.500" y="23" width="14.500" height="5.500" rx="2" fill="#1a1a1c" />
        <path d="m27.500 38.500 2-3 2 3M33.500 37.500h4M33.500 35.500h3" stroke="#25282d" strokeWidth="1.100" />
      </Cell>
      <div className="flex w-[22px] shrink-0">
        <Divider />
      </div>
      <Cell>
        <Whale />
      </Cell>
      <Cell>
        <Whale />
      </Cell>
      <Cell>
        <g stroke="#fff" strokeLinecap="square">
          <path d="m9 12 25 26" strokeWidth="11" />
          <path d="M28 19 9 37.500" strokeWidth="11" />
          <circle cx="33" cy="14.500" r="8.500" strokeWidth="4" />
        </g>
        <path d="m7 10 27.500 28.500" stroke="#468c2c" strokeWidth="6.500" />
        <path d="M29 18 7 39.500M12 32l5 5" stroke="#3f8527" strokeWidth="6" />
        <circle cx="33" cy="14.500" r="9" fill="#4d9831" />
        <circle cx="35.500" cy="12" r="3.700" fill="#fff" stroke="#1e3a15" />
      </Cell>
      <div className="flex w-[21px] shrink-0">
        <Divider />
      </div>
      <Cell>
        <path d="M12 2h17l7 7v6H11z" fill="#eeeae6" />
        <path d="M18 13V5q4-4 8 0v8z" fill="#b98361" />
        <circle cx="22" cy="4" r="2" fill="#4c342a" />
        <path d="M4.500 13h38v25h-38z" fill="#f4f5f5" />
        <path d="M6 14.500h35v22H6z" fill="#1f6d89" />
        <path d="m6 23 10 2v4L6 28zM41 24l-9 2v4l9-1z" fill="#111c22" />
        <path d="M15 26q3-2 6 1l-2 3-4-1zM32 26l-7 1-1 3 8 0z" fill="#86b54e" />
        <rect x="16.500" y="18" width="6" height="7" rx="1" fill="#c5282e" />
      </Cell>
      <Cell>
        <path d="M2 13.500h42v21H2z" fill="#2b2c2f" />
        <path d="M2 13.500h8v21H2z" fill="#3c3d40" />
        <path d="M10 14.500h34" stroke="#55565a" strokeWidth="1" />
        <path d="M12 20h30M12 26h30M12 32h17" stroke="#c4d2da" strokeWidth="2.500" strokeDasharray="2.500 3" />
        <path d="M17.500 20h2.500M28 20h3" stroke="#49b6e6" strokeWidth="2.500" />
        <rect x="29.500" y="30" width="14" height="14" rx="3" fill="#eef0f5" />
        <path d="M37 30h-4.500q-3 0-3 3v8q0 3 3 3H38q-.5-2-.5-5.500H35q0-5 2-8.500z" fill="#2693f7" />
        <path d="M33 34v1.500M40 34v1.500M32 39.500q4.500 3.500 9 0" stroke="#1b2b49" strokeWidth=".9" />
      </Cell>
      <Cell>
        <defs>
          <linearGradient id="bin" x2="1" y2="0">
            <stop stopColor="#9a9fa1" />
            <stop offset=".3" stopColor="#60686a" />
            <stop offset=".7" stopColor="#4c5456" />
            <stop offset="1" stopColor="#8e9496" />
          </linearGradient>
        </defs>
        <path d="m9 6 6-3.500 6 2 5-2.500 6 2.500 6-.5 1 6H9z" fill="#e8e8e8" />
        <path d="m13 5 3 3M22 4l2 4M30 4l-3 4M36 5l-3 3" stroke="#3b3c40" strokeWidth="1.600" />
        <path d="m18 4 2 3M27 7l3-2" stroke="#b05039" strokeWidth="1.500" />
        <path d="M8 6.500q15.500 6 31 0L35.500 41q-12 4.500-24 0z" fill="url(#bin)" />
        <path d="M8 6.500q15.500 6 31 0" stroke="#b7bcbd" />
        <path d="m14 13 2 26M32 14l-2 25" stroke="#868d90" strokeWidth="1.200" strokeOpacity=".5" />
      </Cell>
    </nav>
  );
}

export default function App() {
  return (
    <div className="relative flex h-[1080px] w-[1920px] flex-col overflow-hidden bg-[linear-gradient(90deg,#15141a_0%,#1d1b1d_12%,#15141a_25%,#101015_60%,#1a1218_82%,#21171f_100%)] font-[Inter,sans-serif]">
      <MenuBar />
      <div className="flex h-[994px] shrink-0 flex-col overflow-hidden rounded-[10px] bg-[#323234] shadow-[0_0_0_1px_#07070a,0_14px_14px_0_rgba(0,0,0,0.7)]">
        <TabBar />
        <NavBar />
        <Bookmarks />
        <Page />
      </div>
      <svg width="1920" height="62" viewBox="0 0 1920 62" className="shrink-0">
        <defs>
          <filter id="soft" x="-5%" y="-20%" width="110%" height="140%">
            <feGaussianBlur stdDeviation="2.500" />
          </filter>
        </defs>
        <g filter="url(#soft)">
          <path d="m0 14 90-10-30 40-10 18H0z" fill="#2a2725" fillOpacity=".45" />
          <path d="m60 44 24-20 40-3 136-9v22L60 44z" fill="#4a403d" fillOpacity=".5" />
          <path d="M1834 6h22v32l-22 8z" fill="#2b2a38" fillOpacity=".6" />
          <path d="M1890 18h30v44h-80l50-14z" fill="#3b2e39" fillOpacity=".7" />
        </g>
        <path d="m1804 60.500 94-14.500" stroke="#75606f" strokeWidth="1.800" />
      </svg>
      <Dock />
    </div>
  );
}
